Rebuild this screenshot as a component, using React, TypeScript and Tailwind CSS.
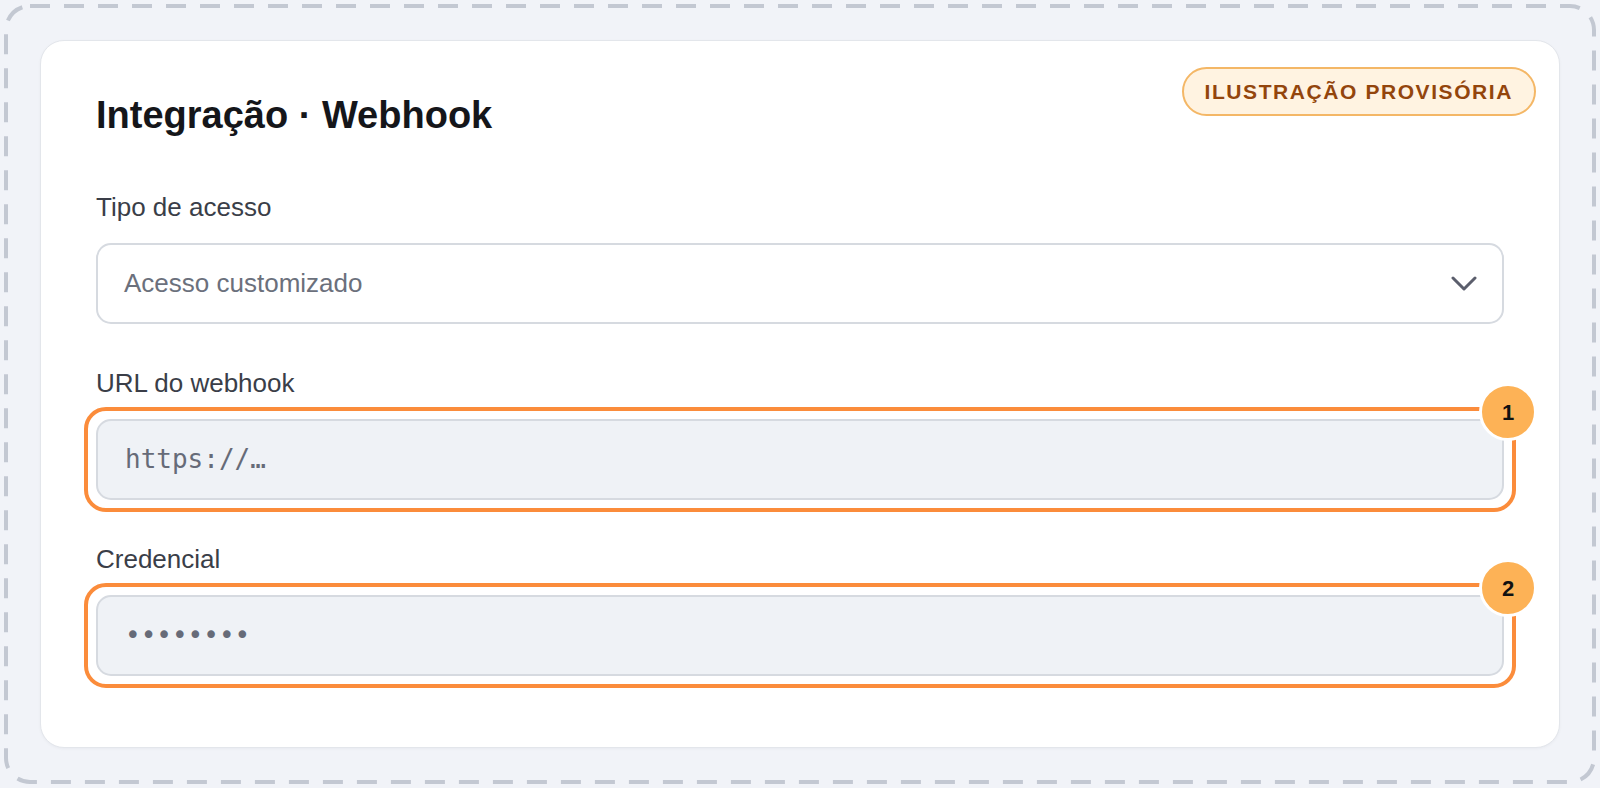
import React from "react";

function Chevron() {
  return (
    <svg width="26" height="15" viewBox="0 0 26 15" fill="none" aria-hidden="true">
      <path d="M2 2 L13 13 L24 2" stroke="#5b5e6c" strokeWidth="3" strokeLinecap="round" strokeLinejoin="round" />
    </svg>
  );
}

function Highlighted({ n, children }: { n: string; children: React.ReactNode }) {
  return (
    <div className="relative mt-5">
      <div className="pointer-events-none absolute -inset-3 rounded-[22px] border-4 border-[#fb8c3b]" />
      <div className="relative flex h-[81px] items-center rounded-[15px] border-2 border-[#d6dae0] bg-[#eff2f6] pl-[27px] font-['DejaVu_Sans_Mono','Liberation_Mono',monospace] text-[26px] text-[#666b78]">
        {children}
      </div>
      <div className="absolute -top-[36px] -right-[33px] flex size-[58px] items-center justify-center rounded-full border-[3px] border-white bg-[#fdb256] text-[22px] font-bold text-[#111111]">
        {n}
      </div>
    </div>
  );
}

function DashedFrame() {
  return (
    <svg
      className="pointer-events-none absolute inset-0"
      width="1592"
      height="780"
      viewBox="0 0 1592 780"
      fill="none"
      aria-hidden="true"
    >
      <rect x="2" y="2" width="1588" height="776" rx="24" stroke="#c3c8d2" strokeWidth="4" strokeDasharray="20 14" />
    </svg>
  );
}

export default function App() {
  return (
    <div className="min-h-[788px] bg-[#f1f3f8] p-1 font-['Liberation_Sans',Arial,sans-serif]">
      <div className="relative flex h-[780px] rounded-[26px] p-9">
        <DashedFrame />
        <div className="relative flex-1 rounded-[24px] border border-[#e3e6eb] bg-white px-[55px] pt-[51px] shadow-[0_1px_3px_rgba(16,24,40,0.04)]">
          <span className="absolute top-[26px] right-[23px] flex h-[49px] items-center rounded-full border-2 border-[#f4b766] bg-[#fff3e1] px-[21px] text-[21px] font-bold tracking-[0.075em] text-[#93450c]">
            ILUSTRAÇÃO PROVISÓRIA
          </span>
          <h1 className="text-[38px] font-bold leading-[46px] text-[#15161a]">Integração · Webhook</h1>

          <div className="mt-[53px]">
            <label className="block text-[26px] leading-[32px] text-[#3a3e48]">Tipo de acesso</label>
            <div className="mt-5 flex h-[81px] items-center justify-between rounded-[15px] border-2 border-[#d6dae0] bg-white pl-[26px] pr-[25px]">
              <span className="text-[26px] text-[#6b707c]">Acesso customizado</span>
              <Chevron />
            </div>
          </div>

          <div className="mt-[43px]">
            <label className="block text-[26px] leading-[32px] text-[#3a3e48]">URL do webhook</label>
            <Highlighted n="1">https://…</Highlighted>
          </div>

          <div className="mt-[43px]">
            <label className="block text-[26px] leading-[32px] text-[#3a3e48]">Credencial</label>
            <Highlighted n="2">••••••••</Highlighted>
          </div>
        </div>
      </div>
    </div>
  );
}
